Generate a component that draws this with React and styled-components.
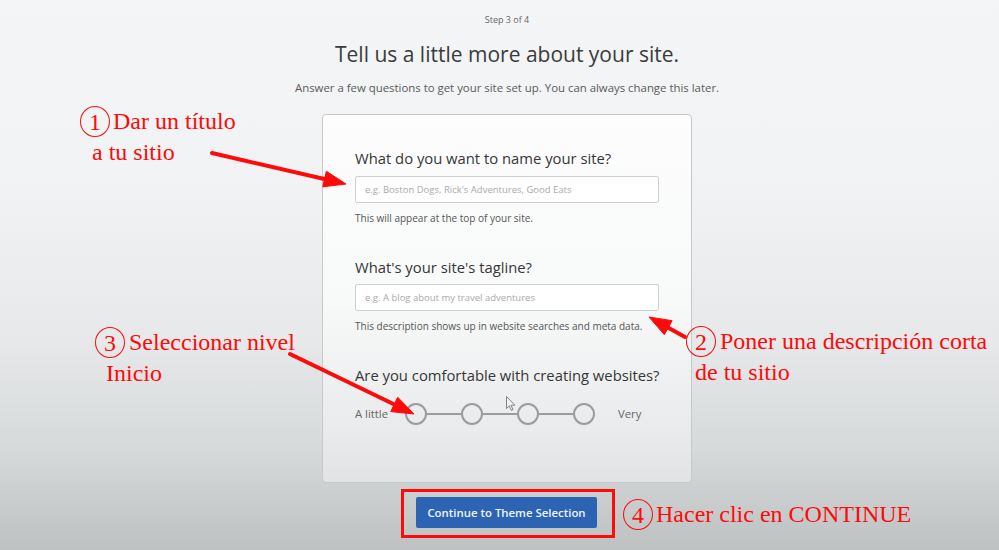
import React from "react";
import styled, { createGlobalStyle } from "styled-components";

const GlobalStyle = createGlobalStyle`
  html, body {
    margin: 0;
    padding: 0;
  }
  body {
    font-family: "Open Sans", "Noto Sans", sans-serif;
  }
`;

const RED = "#ff0a0a";

const Page = styled.div`
  position: relative;
  width: 999px;
  height: 550px;
  overflow: hidden;
  background: linear-gradient(
    180deg,
    #f3f5f6 0%,
    #f0f2f3 35%,
    #e6e8e9 62%,
    #d6d9da 82%,
    #bec1c2 100%
  );
  display: flex;
  flex-direction: column;
  align-items: center;
  padding: 14px 0 0 15px;
  box-sizing: border-box;
`;

const Step = styled.div`
  font-size: 9px;
  line-height: 12px;
  color: #666;
`;

const Title = styled.h1`
  margin: 14px 0 0;
  font-size: 21px;
  line-height: 28px;
  font-weight: 400;
  color: #3b3b3b;
`;

const Subtitle = styled.p`
  margin: 12px 0 0;
  font-size: 11.4px;
  line-height: 16px;
  color: #5a5a5a;
`;

const Card = styled.div`
  margin-top: 18px;
  width: 370px;
  height: 369px;
  box-sizing: border-box;
  border: 1px solid #c6c8c9;
  border-radius: 4px;
  background: linear-gradient(180deg, #fdfdfd 0%, #f8f9f9 50%, #e9ebec 85%, #e1e3e4 100%);
  padding: 33px 32px 0 32px;
  display: flex;
  flex-direction: column;
`;

const Question = styled.label`
  font-size: 14.8px;
  line-height: 20px;
  color: #363636;
  white-space: nowrap;
  margin-top: ${(p) => (p.$first ? 0 : 32)}px;
`;

const Input = styled.input`
  margin-top: ${(p) => p.$gap || 8}px;
  width: 100%;
  height: 27px;
  box-sizing: border-box;
  border: 1px solid #cdcfd0;
  border-radius: 2px;
  background: #fff;
  padding: 0 9px;
  font-family: "Open Sans", sans-serif;
  font-size: 9.5px;
  color: #333;
  outline: none;
  &::placeholder {
    color: #a9a9a9;
  }
`;

const Help = styled.div`
  margin-top: 8px;
  font-size: 10px;
  line-height: 14px;
  color: #555;
`;

const SliderRow = styled.div`
  margin-top: 18px;
  display: flex;
  align-items: center;
  height: 21px;
  font-size: 11.3px;
  color: #666;
`;

const Track = styled.div`
  display: flex;
  align-items: center;
  margin: 0 23px 0 17px;
`;

const Dot = styled.span`
  width: 18px;
  height: 18px;
  border: 2px solid #9a9c9d;
  border-radius: 50%;
  background: transparent;
`;

const Line = styled.span`
  width: 34px;
  height: 2px;
  background: #9a9c9d;
`;

const Highlight = styled.div`
  margin-top: 6px;
  margin-left: 2px;
  box-sizing: border-box;
  width: 214px;
  height: 49px;
  border: 3px solid ${RED};
  display: flex;
  align-items: flex-start;
  justify-content: center;
  padding: 5px 3px 0 0;
`;

const Button = styled.button`
  width: 181px;
  height: 31px;
  border: none;
  border-radius: 2px;
  background: #2c63b2;
  color: #eef3fb;
  font-family: "Open Sans", sans-serif;
  font-size: 11.4px;
  font-weight: 600;
  cursor: pointer;
`;

const Note = styled.div`
  position: absolute;
  left: ${(p) => p.$x}px;
  top: ${(p) => p.$y}px;
  font-family: "Liberation Serif", "Times New Roman", serif;
  font-size: 24px;
  line-height: 31px;
  color: ${RED};
  white-space: nowrap;
`;

const NoteRow = styled.div`
  display: flex;
  align-items: center;
  padding-left: ${(p) => p.$indent || 0}px;
`;

const Num = styled.span`
  display: inline-flex;
  align-items: center;
  justify-content: center;
  width: 28px;
  height: 29px;
  border: 1.6px solid ${RED};
  border-radius: 50%;
  margin-right: ${(p) => p.$gap || 4}px;
  font-size: 24px;
  line-height: 1;
`;

const Overlay = styled.svg`
  position: absolute;
  left: 0;
  top: 0;
  pointer-events: none;
`;

const Arrow = ({ from, to }) => {
  const [x1, y1] = from;
  const [x2, y2] = to;
  const dx = x2 - x1;
  const dy = y2 - y1;
  const len = Math.hypot(dx, dy);
  const ux = dx / len;
  const uy = dy / len;
  const head = 22;
  const half = 8;
  const bx = x2 - ux * head;
  const by = y2 - uy * head;
  const pts = [
    [x2, y2],
    [bx - uy * half, by + ux * half],
    [bx + uy * half, by - ux * half],
  ]
    .map((p) => p.join(","))
    .join(" ");
  return (
    <g fill={RED} stroke={RED}>
      <line x1={x1} y1={y1} x2={bx + ux * 2} y2={by + uy * 2} strokeWidth="4" strokeLinecap="round" />
      <polygon points={pts} strokeWidth="1" strokeLinejoin="round" />
    </g>
  );
};

const App = () => {
  return (
    <>
      <GlobalStyle />
      <Page>
        <Step>Step 3 of 4</Step>
        <Title>Tell us a little more about your site.</Title>
        <Subtitle>
          Answer a few questions to get your site set up. You can always change this later.
        </Subtitle>

        <Card>
          <Question $first>What do you want to name your site?</Question>
          <Input placeholder="e.g. Boston Dogs, Rick's Adventures, Good Eats" />
          <Help>This will appear at the top of your site.</Help>

          <Question>What's your site's tagline?</Question>
          <Input $gap={7} placeholder="e.g. A blog about my travel adventures" />
          <Help>This description shows up in website searches and meta data.</Help>

          <Question>Are you comfortable with creating websites?</Question>
          <SliderRow>
            <span>A little</span>
            <Track>
              <Dot />
              <Line />
              <Dot />
              <Line />
              <Dot />
              <Line />
              <Dot />
            </Track>
            <span>Very</span>
          </SliderRow>
        </Card>

        <Highlight>
          <Button>Continue to Theme Selection</Button>
        </Highlight>

        <Note $x={80} $y={106}>
          <NoteRow>
            <Num $gap={3}>1</Num>Dar un título
          </NoteRow>
          <NoteRow $indent={12}>a tu sitio</NoteRow>
        </Note>

        <Note $x={95} $y={327}>
          <NoteRow>
            <Num $gap={4}>3</Num>Seleccionar nivel
          </NoteRow>
          <NoteRow $indent={11}>Inicio</NoteRow>
        </Note>

        <Note $x={686} $y={326}>
          <NoteRow>
            <Num $gap={4}>2</Num>Poner una descripción corta
          </NoteRow>
          <NoteRow $indent={9}>de tu sitio</NoteRow>
        </Note>

        <Note $x={623} $y={499}>
          <NoteRow>
            <Num $gap={3}>4</Num>Hacer clic en CONTINUE
          </NoteRow>
        </Note>

        <Overlay width="999" height="550" viewBox="0 0 999 550">
          <Arrow from={[212, 153]} to={[346, 184]} />
          <Arrow from={[290, 354]} to={[414, 414]} />
          <Arrow from={[685, 337]} to={[649, 317]} />
          <path
            d="M506.5 396.5 L506.5 408.5 L509.3 405.8 L511.3 410.3 L513 409.5 L511 405.2 L514.8 405.2 Z"
            fill="#f4f4f4"
            stroke="#777"
            strokeWidth="0.9"
            strokeLinejoin="round"
          />
        </Overlay>
      </Page>
    </>
  );
};

export default App;
